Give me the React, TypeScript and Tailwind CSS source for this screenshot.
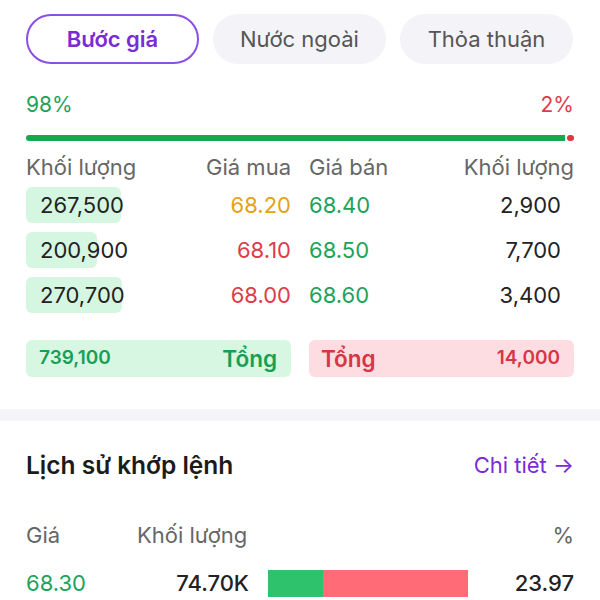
import React from "react";

const tabs = ["Bước giá", "Nước ngoài", "Thỏa thuận"];

const rows = [
  { bidVol: "267,500", barW: "w-[95px]", bid: "68.20", bidColor: "text-[#e3a312]", ask: "68.40", askVol: "2,900" },
  { bidVol: "200,900", barW: "w-[71px]", bid: "68.10", bidColor: "text-[#de3b4b]", ask: "68.50", askVol: "7,700" },
  { bidVol: "270,700", barW: "w-[96px]", bid: "68.00", bidColor: "text-[#de3b4b]", ask: "68.60", askVol: "3,400" },
];

export default function App() {
  return (
    <div className="w-[600px] h-[600px] overflow-hidden bg-white font-['Inter',sans-serif] text-[22px] text-[#222]">
      <div className="px-[26px]">
        {/* tabs */}
        <div className="flex gap-[14px] pt-[14px]">
          {tabs.map((t, i) => (
            <div
              key={t}
              className={
                i === 0
                  ? "flex h-[50px] w-[173px] items-center justify-center rounded-full border-2 border-[#8c4fe6] font-semibold text-[#7a2bd8]"
                  : "flex h-[50px] w-[173px] items-center justify-center rounded-full bg-[#f3f3f8] text-[#555]"
              }
            >
              {t}
            </div>
          ))}
        </div>

        {/* buy / sell ratio */}
        <div className="mt-[27px] flex justify-between leading-[28px] text-[21px]">
          <span className="text-[#1ea25a]">98%</span>
          <span className="text-[#de3b4b]">2%</span>
        </div>
        <div className="mt-[16px] flex h-[6px] gap-[2px]">
          <div className="h-full flex-1 rounded-l-full bg-[#15a84c]" />
          <div className="h-full w-[7px] rounded-full bg-[#e5343f]" />
        </div>

        {/* order book */}
        <div className="mt-[12px] grid grid-cols-2 gap-x-[18px] leading-[28px] text-[#666]">
          <div className="flex justify-between">
            <span>Khối lượng</span>
            <span>Giá mua</span>
          </div>
          <div className="flex justify-between">
            <span>Giá bán</span>
            <span>Khối lượng</span>
          </div>
        </div>

        <div className="mt-[6px] flex flex-col gap-[9px]">
          {rows.map((r) => (
            <div key={r.bidVol} className="grid h-[36px] grid-cols-2 gap-x-[18px]">
              <div className="relative flex items-center justify-between">
                <div className={`absolute left-0 top-0 h-full rounded-[6px] bg-[#d5f6e0] ${r.barW}`} />
                <span className="relative pl-[14px]">{r.bidVol}</span>
                <span className={`relative ${r.bidColor}`}>{r.bid}</span>
              </div>
              <div className="flex items-center justify-between">
                <span className="text-[#1ea25a]">{r.ask}</span>
                <span className="pr-[13px]">{r.askVol}</span>
              </div>
            </div>
          ))}
        </div>

        {/* totals */}
        <div className="mt-[27px] grid grid-cols-2 gap-x-[18px]">
          <div className="flex h-[37px] items-center justify-between rounded-[6px] bg-[#d8f7e2] pl-[13px] pr-[14px] text-[#17a055]">
            <span className="text-[19px] font-semibold">739,100</span>
            <span className="text-[22.5px] font-semibold">Tổng</span>
          </div>
          <div className="flex h-[37px] items-center justify-between rounded-[6px] bg-[#fddde1] pl-[12px] pr-[14px] text-[#d93545]">
            <span className="text-[22.5px] font-semibold">Tổng</span>
            <span className="text-[19px] font-semibold">14,000</span>
          </div>
        </div>
      </div>

      <div className="mt-[32px] h-[12px] bg-[#f5f5f9]" />

      {/* match history */}
      <div className="px-[26px]">
        <div className="mt-[26px] flex items-center justify-between">
          <span className="text-[24.5px] font-semibold text-[#1b1b1b]">Lịch sử khớp lệnh</span>
          <span className="text-[22px] text-[#7a2bd8]">Chi tiết →</span>
        </div>

        <div className="mt-[37px] flex items-center leading-[28px] text-[#666]">
          <span className="w-[111px]">Giá</span>
          <span className="flex-1">Khối lượng</span>
          <span>%</span>
        </div>

        <div className="mt-[21px] flex h-[27px] items-center">
          <span className="w-[111px] text-[#1ea25a]">68.30</span>
          <span className="w-[112px] text-right font-medium">74.70K</span>
          <div className="ml-[19px] flex h-full w-[200px]">
            <div className="h-full w-[55px] bg-[#2fc26c]" />
            <div className="h-full flex-1 bg-[#ff6b77]" />
          </div>
          <span className="flex-1 text-right font-medium">23.97</span>
        </div>
      </div>
    </div>
  );
}
